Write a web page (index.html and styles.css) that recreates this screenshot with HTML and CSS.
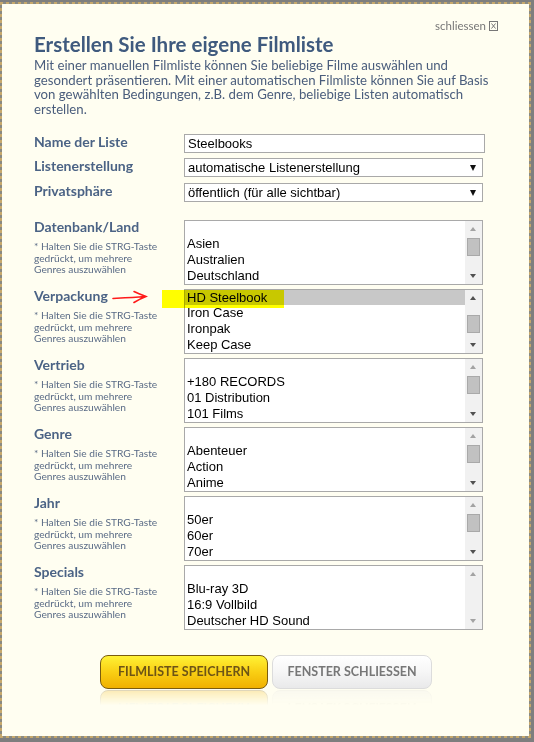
FILE: index.html
```html
<!DOCTYPE html>
<html lang="de">
<head>
<meta charset="utf-8">
<title>Filmliste</title>
<link rel="stylesheet" href="styles.css">
</head>
<body>
<div class="frame">
  <div class="modal">
    <div class="close-row">
      <span class="close">schliessen
        <svg class="xbox" width="9" height="10" viewBox="0 0 9 10"><rect x="0.5" y="0.5" width="8" height="9" fill="none" stroke="#777"/><path d="M2.5 2.5 L6.5 7.5 M6.5 2.5 L2.5 7.5" stroke="#777" stroke-width="1"/></svg>
      </span>
    </div>
    <h1 class="title">Erstellen Sie Ihre eigene Filmliste</h1>
    <p class="intro">Mit einer manuellen Filmliste können Sie beliebige Filme auswählen und gesondert präsentieren. Mit einer automatischen Filmliste können Sie auf Basis von gewählten Bedingungen, z.B. dem Genre, beliebige Listen automatisch erstellen.</p>

    <div class="basic">
      <div class="lbl">Name der Liste</div>
      <div class="textbox">Steelbooks</div>
      <div class="lbl">Listenerstellung</div>
      <div class="select">automatische Listenerstellung<span class="caret"></span></div>
      <div class="lbl">Privatsphäre</div>
      <div class="select">öffentlich (für alle sichtbar)<span class="caret"></span></div>
    </div>

    <div class="lists">
      <div class="lrow">
        <div class="lblcol"><div class="lbl">Datenbank/Land</div><div class="hint">* Halten Sie die STRG-Taste<br>gedrückt, um mehrere<br>Genres auszuwählen</div></div>
        <div class="listbox">
          <div class="opts"><div class="opt"></div><div class="opt">Asien</div><div class="opt">Australien</div><div class="opt">Deutschland</div></div>
          <div class="sb"><span class="up off"></span><span class="thumb t0"></span><span class="down"></span></div>
        </div>
      </div>
      <div class="lrow">
        <div class="lblcol"><div class="lbl">Verpackung</div><div class="hint">* Halten Sie die STRG-Taste<br>gedrückt, um mehrere<br>Genres auszuwählen</div></div>
        <div class="listbox">
          <div class="opts"><div class="opt sel">HD Steelbook</div><div class="opt">Iron Case</div><div class="opt">Ironpak</div><div class="opt">Keep Case</div></div>
          <div class="sb"><span class="up"></span><span class="thumb t1"></span><span class="down"></span></div>
        </div>
      </div>
      <div class="lrow">
        <div class="lblcol"><div class="lbl">Vertrieb</div><div class="hint">* Halten Sie die STRG-Taste<br>gedrückt, um mehrere<br>Genres auszuwählen</div></div>
        <div class="listbox">
          <div class="opts"><div class="opt"></div><div class="opt">+180 RECORDS</div><div class="opt">01 Distribution</div><div class="opt">101 Films</div></div>
          <div class="sb"><span class="up off"></span><span class="thumb t0"></span><span class="down"></span></div>
        </div>
      </div>
      <div class="lrow">
        <div class="lblcol"><div class="lbl">Genre</div><div class="hint">* Halten Sie die STRG-Taste<br>gedrückt, um mehrere<br>Genres auszuwählen</div></div>
        <div class="listbox">
          <div class="opts"><div class="opt"></div><div class="opt">Abenteuer</div><div class="opt">Action</div><div class="opt">Anime</div></div>
          <div class="sb"><span class="up off"></span><span class="thumb t0"></span><span class="down"></span></div>
        </div>
      </div>
      <div class="lrow">
        <div class="lblcol"><div class="lbl">Jahr</div><div class="hint">* Halten Sie die STRG-Taste<br>gedrückt, um mehrere<br>Genres auszuwählen</div></div>
        <div class="listbox">
          <div class="opts"><div class="opt"></div><div class="opt">50er</div><div class="opt">60er</div><div class="opt">70er</div></div>
          <div class="sb"><span class="up off"></span><span class="thumb t0"></span><span class="down"></span></div>
        </div>
      </div>
      <div class="lrow">
        <div class="lblcol"><div class="lbl">Specials</div><div class="hint">* Halten Sie die STRG-Taste<br>gedrückt, um mehrere<br>Genres auszuwählen</div></div>
        <div class="listbox">
          <div class="opts"><div class="opt"></div><div class="opt">Blu-ray 3D</div><div class="opt">16:9 Vollbild</div><div class="opt">Deutscher HD Sound</div></div>
          <div class="sb"><span class="up off"></span><span class="nothumb"></span><span class="down off"></span></div>
        </div>
      </div>
    </div>

    <div class="buttons">
      <div class="btn btn-save">FILMLISTE SPEICHERN</div>
      <div class="btn btn-close">FENSTER SCHLIESSEN</div>
    </div>

    <div class="marker"></div>
    <svg class="arrow" width="36" height="14" viewBox="0 0 36 14"><path d="M1 8.5 C10 8 20 7.5 33 6.5 M22 1.5 C26 3.5 30 5 34 6.5 C30 8 26 10 22 12.5" fill="none" stroke="#ff1a1a" stroke-width="1.6" stroke-linecap="round"/></svg>
  </div>
</div>
</body>
</html>
```

FILE: styles.css
```css
html, body {
  margin: 0;
  padding: 0;
}
body {
  background: #7e7e7e;
  width: 534px;
  height: 742px;
  overflow: hidden;
}
.frame {
  box-sizing: border-box;
  width: 531px;
  height: 736px;
  margin-top: 2px;
  padding: 2px;
  background:
    repeating-linear-gradient(90deg, #c6a86c 0 3px, #8a8a82 3px 6px) left top / 100% 2px no-repeat,
    repeating-linear-gradient(90deg, #c6a86c 0 3px, #8a8a82 3px 6px) left bottom / 100% 2px no-repeat,
    repeating-linear-gradient(180deg, #c6a86c 0 3px, #8a8a82 3px 6px) left top / 2px 100% no-repeat,
    repeating-linear-gradient(180deg, #c6a86c 0 3px, #8a8a82 3px 6px) right top / 2px 100% no-repeat;
}
.modal {
  position: relative;
  box-sizing: border-box;
  height: 100%;
  background: #fffef1;
  padding: 15px 40px 0 32px;
  font-family: Lato, "Open Sans", sans-serif;
  color: #4a5d7c;
}
.close-row {
  display: flex;
  justify-content: flex-end;
  margin-right: -9px;
  height: 13px;
}
.close {
  display: flex;
  align-items: center;
  gap: 3px;
  font-size: 11.5px;
  color: #777;
  line-height: 13px;
}
.xbox { display: block; }
.title {
  margin: 0;
  font-size: 20.5px;
  line-height: 24px;
  font-weight: bold;
  color: #3f5a7e;
}
.intro {
  margin: 2px 0 0 0;
  font-size: 13.2px;
  line-height: 14.7px;
  color: #4a5d7c;
}
.basic {
  margin-top: 17px;
  margin-right: 4px;
  display: grid;
  grid-template-columns: 150px 1fr;
  row-gap: 5.5px;
  align-items: center;
}
.basic .lbl {
  margin-top: -3px;
}
.lbl {
  font-size: 14px;
  font-weight: bold;
  color: #4b6385;
  line-height: 16px;
}
.textbox, .select {
  box-sizing: border-box;
  height: 19px;
  border: 1px solid #a9a9a9;
  background: #fff;
  font-family: "Liberation Sans", Arial, sans-serif;
  font-size: 13px;
  line-height: 17px;
  color: #000;
  padding-left: 3px;
}
.select {
  margin-right: 2px;
  position: relative;
}
.caret {
  position: absolute;
  right: 6px;
  top: 6px;
  width: 0;
  height: 0;
  border-left: 3.5px solid transparent;
  border-right: 3.5px solid transparent;
  border-top: 6px solid #111;
}
.lists {
  margin-top: 18px;
  margin-right: 4px;
  display: flex;
  flex-direction: column;
  gap: 4px;
}
.lrow {
  display: grid;
  grid-template-columns: 150px 1fr;
}
.lblcol .lbl {
  margin-top: -1px;
}
.hint {
  margin-top: 6px;
  font-size: 10.2px;
  line-height: 11.7px;
  color: #5a6b86;
}
.listbox {
  box-sizing: border-box;
  height: 65px;
  margin-right: 2px;
  border: 1px solid #a9a9a9;
  background: #fff;
  display: flex;
  overflow: hidden;
}
.opts {
  flex: 1;
  font-family: "Liberation Sans", Arial, sans-serif;
  font-size: 13px;
  color: #000;
}
.opt {
  height: 15.6px;
  line-height: 15.6px;
  padding-left: 2px;
  white-space: nowrap;
}
.opt.sel {
  background: #c8c8c8;
}
.sb {
  width: 17px;
  background: #f1f1f1;
  position: relative;
}
.sb .up, .sb .down {
  position: absolute;
  left: 5px;
  width: 0;
  height: 0;
  border-left: 3.5px solid transparent;
  border-right: 3.5px solid transparent;
}
.sb .up {
  top: 6px;
  border-bottom: 4px solid #505050;
}
.sb .down {
  bottom: 6px;
  border-top: 4px solid #505050;
}
.sb .up.off { border-bottom-color: #a3a3a3; }
.sb .down.off { border-top-color: #a3a3a3; }
.thumb {
  position: absolute;
  left: 2px;
  width: 11px;
  height: 16px;
  background: #c1c1c1;
  border: 1px solid #a9a9a9;
}
.thumb.t0 { top: 17px; }
.thumb.t1 { top: 25px; }
.buttons {
  margin-top: 25px;
  display: flex;
  gap: 4px;
  padding-left: 66px;
}
.btn {
  box-sizing: border-box;
  height: 34px;
  border-radius: 8px;
  display: flex;
  align-items: center;
  justify-content: center;
  font-family: Lato, "Open Sans", sans-serif;
  font-size: 12.5px;
  font-weight: bold;
  -webkit-box-reflect: below 1px linear-gradient(transparent 55%, rgba(255,255,255,0.25));
}
.btn-save {
  width: 168px;
  border: 1px solid #7a5c10;
  background: linear-gradient(#fff235, #f9cf14 50%, #f0b000);
  color: #6d5416;
}
.btn-close {
  width: 160px;
  border: 1px solid #dcdcdc;
  background: linear-gradient(#ffffff, #f6f6f6 50%, #e9e9ea);
  color: #777;
}
.marker {
  position: absolute;
  left: 160px;
  top: 286px;
  width: 122px;
  height: 18px;
  background: #ffff00;
  mix-blend-mode: multiply;
}
.arrow {
  position: absolute;
  left: 110px;
  top: 286px;
}
```
